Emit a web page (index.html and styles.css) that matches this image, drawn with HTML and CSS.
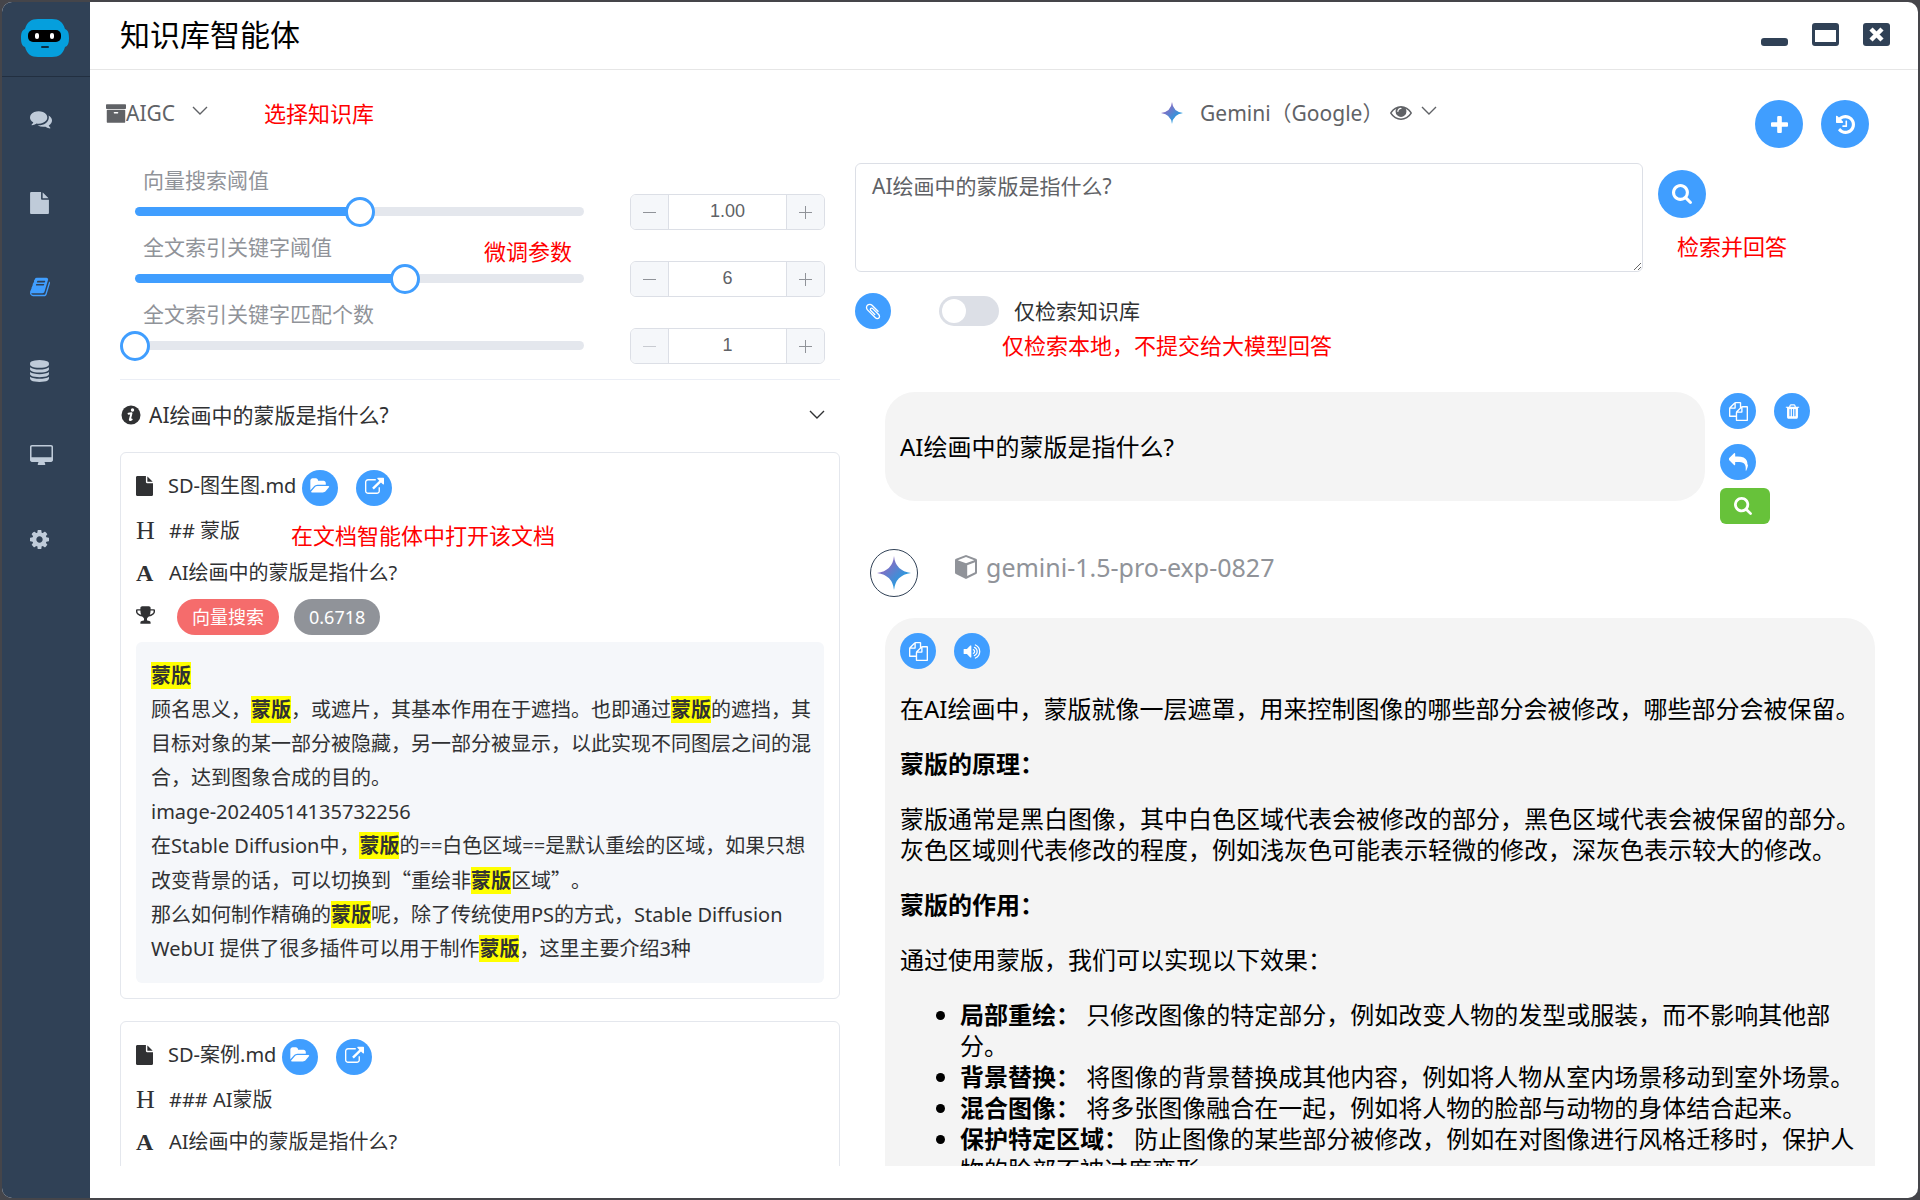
FILE: index.html
```html
<!DOCTYPE html>
<html lang="zh-CN">
<head>
<meta charset="utf-8">
<title>知识库智能体</title>
<link rel="stylesheet" href="styles.css">
</head>
<body>
<svg class="sprite" aria-hidden="true">
  <defs>
    <linearGradient id="spark-fill" x1="0" y1="0" x2="1" y2="1">
      <stop offset="0.2" stop-color="#9168c0"/>
      <stop offset="0.5" stop-color="#5684d1"/>
      <stop offset="0.8" stop-color="#1ba1e3"/>
    </linearGradient>
  </defs>
  <symbol id="comments" viewBox="0 0 1792 1792"><path d="M1408 768q0 139-94 257t-256.5 186.500-353.5 68.500q-86 0-176-16-124 88-278 128-36 9-86 16h-3q-11 0-20.500-8t-11.500-21q-1-3-1-6.500t.5-6.500 2-6l2.500-5 3.500-5.500 4-5 4.500-5 4-4.500q5-6 23-25t26-29.500 22.500-29 25-38.500 20.500-44q-124-72-195-177t-71-224q0-139 94-257t256.500-186.500 353.500-68.500 353.500 68.500 256.500 186.500 94 257zm384 256q0 120-71 224.500t-195 176.500q10 24 20.500 44t25 38.500 22.500 29 26 29.500 23 25q1 1 4 4.500t4.500 5 4 5 3.500 5.500l2.500 5 2 6 .5 6.500-1 6.500q-3 14-13 22t-22 7q-50-7-86-16-154-40-278-128-90 16-176 16-271 0-472-132 58 4 88 4 161 0 309-45t264-129q125-92 192-212t67-254q0-77-23-152 129 71 204 178t75 230z"/></symbol>
  <symbol id="file" viewBox="128 0 1536 1792"><path d="M1152 512v-472q22 14 36 28l408 408q14 14 28 36h-472zm-128 32q0 40 28 68t68 28h544v1056q0 40-28 68t-68 28h-1344q-40 0-68-28t-28-68v-1600q0-40 28-68t68-28h800v544z"/></symbol>
  <symbol id="book" viewBox="64 64 1664 1664"><path d="M1703 478q40 57 18 129l-275 906q-19 64-76.500 107.500t-122.500 43.500h-923q-77 0-148.500-53.500t-99.500-131.500q-24-67-2-127 0-4 3-27t4-37q1-8-3-21.500t-3-19.500q2-11 8-21t16.500-23.500 16.500-23.500q23-38 45-91.500t30-91.500q3-10 .5-30t-.5-28q3-11 17-28t17-23q21-36 42-92t25-90q1-9-2.500-32t.5-28q4-13 22-30.500t22-22.500q19-26 42.500-84.500t27.500-96.500q1-8-3-25.500t-2-26.500q2-8 9-18t18-23 17-21q8-12 16.500-30.500t15-35 16-36 19.500-32 26.500-23.500 36-11.500 47.500 5.500l-1 3q38-9 51-9h761q74 0 114 56t18 130l-274 906q-36 119-71.500 153.500t-128.500 34.500h-869q-27 0-38 15-11 16-1 43 24 70 144 70h923q29 0 56-15.500t35-41.500l300-987q7-22 5-57 38 15 59 43zm-1064 2q-4 13 2 22.500t20 9.500h608q13 0 25.500-9.500t16.500-22.500l21-64q4-13-2-22.500t-20-9.500h-608q-13 0-25.500 9.500t-16.500 22.500zm-83 256q-4 13 2 22.500t20 9.500h608q13 0 25.500-9.500t16.500-22.500l21-64q4-13-2-22.500t-20-9.500h-608q-13 0-25.500 9.500t-16.500 22.500z"/></symbol>
  <symbol id="database" viewBox="128 0 1536 1792"><path d="M896 768q237 0 443-43t325-127v170q0 69-103 128t-280 93.500-385 34.500-385-34.500-280-93.500-103-128v-170q119 84 325 127t443 43zm0 768q237 0 443-43t325-127v170q0 69-103 128t-280 93.500-385 34.500-385-34.500-280-93.500-103-128v-170q119 84 325 127t443 43zm0-384q237 0 443-43t325-127v170q0 69-103 128t-280 93.500-385 34.500-385-34.500-280-93.500-103-128v-170q119 84 325 127t443 43zm0-1152q208 0 385 34.500t280 93.500 103 128v128q0 69-103 128t-280 93.500-385 34.500-385-34.500-280-93.500-103-128v-128q0-69 103-128t280-93.500 385-34.500z"/></symbol>
  <symbol id="desktop" viewBox="-64 0 1920 1664"><path d="M1728 992v-832q0-13-9.500-22.500t-22.500-9.500h-1600q-13 0-22.500 9.500t-9.500 22.500v832q0 13 9.500 22.500t22.500 9.500h1600q13 0 22.500-9.500t9.500-22.500zm128-832v1088q0 66-47 113t-113 47h-544q0 37 16 77.500t32 71 16 43.500q0 26-19 45t-45 19h-512q-26 0-45-19t-19-45q0-14 16-44t32-70 16-78h-544q-66 0-113-47t-47-113v-1088q0-66 47-113t113-47h1600q66 0 113 47t47 113z"/></symbol>
  <symbol id="cog" viewBox="128 128 1536 1536"><path d="M1152 896q0-106-75-181t-181-75-181 75-75 181 75 181 181 75 181-75 75-181zm512-109v222q0 12-8 23t-20 13l-185 28q-19 54-39 91 35 50 107 138 10 12 10 25t-9 23q-27 37-99 108t-94 71q-12 0-26-9l-138-108q-44 23-91 38-16 136-29 186-7 28-36 28h-222q-14 0-24.500-8.500t-11.500-21.500l-28-184q-49-16-90-37l-141 107q-10 9-25 9-14 0-25-11-126-114-165-168-7-10-7-23 0-12 8-23 15-21 51-66.500t54-70.500q-27-50-41-99l-183-27q-13-2-21-12.500t-8-23.500v-222q0-12 8-23t19-13l186-28q14-46 39-92-40-57-107-138-10-12-10-24 0-10 9-23 26-36 98.500-107.500t94.500-71.500q13 0 26 10l138 107q44-23 91-38 16-136 29-186 7-28 36-28h222q14 0 24.500 8.500t11.500 21.500l28 184q49 16 90 37l142-107q9-9 24-9 13 0 25 10 129 119 165 170 7 8 7 22 0 12-8 23-15 21-51 66.500t-54 70.500q26 50 41 98l183 28q13 2 21 12.500t8 23.500z"/></symbol>
  <symbol id="archive" viewBox="64 128 1664 1536"><path d="M1088 832q0-26-19-45t-45-19h-256q-26 0-45 19t-19 45 19 45 45 19h256q26 0 45-19t19-45zm576-192v960q0 26-19 45t-45 19h-1408q-26 0-45-19t-19-45v-960q0-26 19-45t45-19h1408q26 0 45 19t19 45zm64-448v256q0 26-19 45t-45 19h-1536q-26 0-45-19t-19-45v-256q0-26 19-45t45-19h1536q26 0 45 19t19 45z"/></symbol>
  <symbol id="eye" viewBox="0 384 1792 1152"><path d="M1664 960q-152-236-381-353 61 104 61 225 0 185-131.500 316.500t-316.500 131.500-316.500-131.500-131.500-316.500q0-121 61-225-229 117-381 353 133 205 333.500 326.500t434.500 121.500 434.500-121.500 333.500-326.500zm-720-384q0-20-14-34t-34-14q-125 0-214.500 89.500t-89.500 214.500q0 20 14 34t34 14 34-14 14-34q0-86 61-147t147-61q20 0 34-14t14-34zm848 384q0 34-20 69-140 230-376.500 368.500t-499.500 138.500-499.500-139-376.500-368q-20-35-20-69t20-69q140-229 376.500-368t499.500-139 499.500 139 376.500 368q20 35 20 69z"/></symbol>
  <symbol id="plus" viewBox="192 128 1408 1408"><path d="M1600 736v192q0 40-28 68t-68 28h-416v416q0 40-28 68t-68 28h-192q-40 0-68-28t-28-68v-416h-416q-40 0-68-28t-28-68v-192q0-40 28-68t68-28h416v-416q0-40 28-68t68-28h192q40 0 68 28t28 68v416h416q40 0 68 28t28 68z"/></symbol>
  <symbol id="history" viewBox="128 128 1536 1536"><path d="M1664 896q0 156-61 298t-164 245-245 164-298 61q-172 0-327-72.500t-264-204.500q-7-10-6.500-22.500t8.500-20.500l137-138q10-9 25-9 16 2 23 12 73 95 179 147t225 52q104 0 198.500-40.500t163.500-109.500 109.500-163.500 40.500-198.500-40.500-198.500-109.500-163.500-163.500-109.500-198.500-40.500q-98 0-188 35.500t-160 101.500l137 138q31 30 14 69-17 40-59 40h-448q-26 0-45-19t-19-45v-448q0-42 40-59 39-17 69 14l130 129q107-101 244.500-156.500t284.500-55.500q156 0 298 61t245 164 164 245 61 298zm-640-288v448q0 14-9 23t-23 9h-320q-14 0-23-9t-9-23v-64q0-14 9-23t23-9h224v-352q0-14 9-23t23-9h64q14 0 23 9t9 23z"/></symbol>
  <symbol id="search" viewBox="64 128 1664 1664"><path d="M1216 832q0-185-131.500-316.500t-316.500-131.500-316.500 131.500-131.500 316.500 131.500 316.500 316.500 131.500 316.500-131.500 131.500-316.500zm512 832q0 52-38 90t-90 38q-54 0-90-38l-343-342q-179 124-399 124-143 0-273.500-55.500t-225-150-150-225-55.500-273.500 55.500-273.500 150-225 225-150 273.500-55.500 273.500 55.500 225 150 150 225 55.500 273.500q0 220-124 399l343 343q37 37 37 90z"/></symbol>
  <symbol id="clip" viewBox="128 64 1536 1664"><path d="M1596 1385q0 117-79 196t-196 79q-135 0-235-100l-777-776q-113-115-113-271 0-159 110-270t269-111q158 0 273 113l605 606q10 10 10 22 0 16-30.500 46.500t-46.500 30.500q-13 0-23-10l-606-607q-79-77-181-77-106 0-179 75t-73 181q0 105 76 181l776 777q63 63 145 63 64 0 106-42t42-106q0-82-63-145l-581-581q-26-24-60-24-29 0-48 19t-19 48q0 32 25 59l410 410q10 10 10 22 0 16-31 47t-47 31q-12 0-22-10l-410-410q-63-61-63-149 0-82 57-139t139-57q88 0 149 63l581 581q100 98 100 235z"/></symbol>
  <symbol id="copy" viewBox="0 0 1792 1792"><path d="M1696 384q40 0 68 28t28 68v1216q0 40-28 68t-68 28h-960q-40 0-68-28t-28-68v-288h-544q-40 0-68-28t-28-68v-672q0-40 20-88t48-76l408-408q28-28 76-48t88-20h416q40 0 68 28t28 68v328q68-40 128-40h416zm-544 213l-299 299h299v-299zm-640-384l-299 299h299v-299zm196 647l316-316v-416h-384v416q0 40-28 68t-68 28h-416v640h512v-256q0-40 20-88t48-76zm956 804v-1152h-384v416q0 40-28 68t-68 28h-416v640h896z"/></symbol>
  <symbol id="trash" viewBox="128 0 1536 1792"><path d="M704 1376v-704q0-14-9-23t-23-9h-64q-14 0-23 9t-9 23v704q0 14 9 23t23 9h64q14 0 23-9t9-23zm256 0v-704q0-14-9-23t-23-9h-64q-14 0-23 9t-9 23v704q0 14 9 23t23 9h64q14 0 23-9t9-23zm256 0v-704q0-14-9-23t-23-9h-64q-14 0-23 9t-9 23v704q0 14 9 23t23 9h64q14 0 23-9t9-23zm-544-992h448l-48-117q-7-9-17-11h-317q-10 2-17 11zm928 32v64q0 14-9 23t-23 9h-96v948q0 83-47 143.500t-113 60.500h-832q-66 0-113-58.500t-47-141.500v-952h-96q-14 0-23-9t-9-23v-64q0-14 9-23t23-9h309l70-167q15-37 54-63t79-26h320q40 0 79 26t54 63l70 167h309q14 0 23 9t9 23z"/></symbol>
  <symbol id="reply" viewBox="0 0 1792 1792"><path d="M1792 1120q0 166-127 451-3 7-10.500 24t-13.500 30-13 22q-12 17-28 17-15 0-23.500-10t-8.500-25q0-9 2.500-26.500t2.500-23.500q5-68 5-123 0-112-19.500-200.500t-54-153.500-89-112-118-76.500-144-46-164-22.500-182.500-6h-224v256q0 26-19 45t-45 19-45-19l-512-512q-19-19-19-45t19-45l512-512q19-19 45-19t45 19 19 45v256h224q713 0 875 403 53 134 53 333z"/></symbol>
  <symbol id="volume" viewBox="0 64 1792 1664"><path d="M832 352v1088q0 26-19 45t-45 19-45-19l-333-333h-262q-26 0-45-19t-19-45v-384q0-26 19-45t45-19h262l333-333q19-19 45-19t45 19 19 45zm384 544q0 76-42.500 141.500t-112.500 93.500q-10 5-25 5-26 0-45-18.500t-19-45.500q0-21 12-35.500t29-25 34-23 29-36 12-56.500-12-56.500-29-36-34-23-29-25-12-35.500q0-27 19-45.500t45-18.500q15 0 25 5 70 27 112.500 93t42.500 142zm256 0q0 153-85 282.500t-225 188.500q-13 5-25 5-27 0-46-19t-19-45q0-39 39-59 56-29 76-44 74-54 115.500-135.500t41.500-173.500-41.500-173.500-115.500-135.500q-20-15-76-44-39-20-39-59 0-26 19-45t45-19q13 0 26 5 140 59 225 188.500t85 282.500zm256 0q0 230-127 422.500t-338 283.500q-13 5-26 5-26 0-45-19t-19-45q0-36 39-59 7-4 22.500-10.500t22.500-10.500q46-25 82-51 123-91 192-227t69-289-69-289-192-227q-36-26-82-51-7-4-22.500-10.500t-22.500-10.500q-39-23-39-59 0-26 19-45t45-19q13 0 26 5 211 91 338 283.500t127 422.500z"/></symbol>
  <symbol id="folder" viewBox="0 0 1920 1792"><path d="M1879 952q0 31-31 66l-336 396q-43 51-120.500 86.500t-143.500 35.500h-1088q-34 0-60.500-13t-26.500-43q0-31 31-66l336-396q43-51 120.500-86.500t143.500-35.500h1088q34 0 60.500 13t26.500 43zm-343-344v160h-832q-94 0-197 47.500t-164 119.500l-337 396-5 6q0-4-.5-12.500t-.5-12.500v-960q0-92 66-158t158-66h320q92 0 158 66t66 158v32h544q92 0 158 66t66 158z"/></symbol>
  <symbol id="open" viewBox="0 -64 1792 1792"><path d="M1408 928v320q0 119-84.500 203.500t-203.500 84.500h-832q-119 0-203.500-84.500t-84.500-203.500v-832q0-119 84.500-203.500t203.500-84.500h704q14 0 23 9t9 23v64q0 14-9 23t-23 9h-704q-66 0-113 47t-47 113v832q0 66 47 113t113 47h832q66 0 113-47t47-113v-320q0-14 9-23t23-9h64q14 0 23 9t9 23zm384-864v512q0 26-19 45t-45 19-45-19l-176-176-652 652q-10 10-23 10t-23-10l-114-114q-10-10-10-23t10-23l652-652-176-176q-19-19-19-45t19-45 45-19h512q26 0 45 19t19 45z"/></symbol>
  <symbol id="trophy" viewBox="64 128 1664 1536"><path d="M522 883q-74-162-74-371h-256v96q0 78 94.500 162t235.500 113zm1078-275v-96h-256q0 209-74 371 141-29 235.500-113t94.500-162zm128-128v128q0 71-41.500 143t-112 130-173 97.500-215.500 44.500q-42 54-95 95-38 34-52.500 72.500t-14.500 89.500q0 54 30.500 91t97.500 37q75 0 133.500 45.500t58.500 114.500v64q0 14-9 23t-23 9h-832q-14 0-23-9t-9-23v-64q0-69 58.500-114.500t133.500-45.500q67 0 97.500-37t30.500-91q0-51-14.500-89.500t-52.500-72.500q-53-41-95-95-113-5-215.500-44.500t-173-97.500-112-130-41.500-143v-128q0-40 28-68t68-28h288v-96q0-66 47-113t113-47h576q66 0 113 47t47 113v96h288q40 0 68 28t28 68z"/></symbol>
  <symbol id="info" viewBox="0 0 20 20"><circle cx="10" cy="10" r="9.500"/><circle cx="11.500" cy="5" r="1.700" fill="#fff"/><path d="M7.500 8.700l3-.4-1.700 6.400q0 .8 1.900-.3" fill="none" stroke="#fff" stroke-width="1.900" stroke-linejoin="round" stroke-linecap="round"/></symbol>
  <symbol id="chevron" viewBox="0 0 16 10"><path d="M1 1l7 7 7-7" fill="none" stroke="currentColor" stroke-width="1.400"/></symbol>
  <symbol id="spark" viewBox="0 0 24 24"><path d="M12 0q1 10.500 12 12-11 1.500-12 12-1-10.500-12-12 11-1.500 12-12z" fill="url(#spark-fill)"/></symbol>
  <symbol id="cube" viewBox="0 0 22 24"><path fill-rule="evenodd" d="M11 0l10 3.800q1 .4 1 1.600v12.200q0 1-.9 1.500L11 24 .9 19.100Q0 18.600 0 17.600V5.400q0-1.200 1-1.600zm0 2.100L2.700 5.200 11 8.300l8.300-3.100zm1.200 19l7.800-3.900V7.300l-7.800 3z"/></symbol>
</svg>

<div class="app">
  <nav class="sidebar" aria-label="主导航">
    <div class="logo">
      <svg width="48" height="38" viewBox="0 0 48 38"><path d="M17 0h14c7 0 11 3 13 10 3 1 4 4 4 9s-1 8-4 9c-2 7-6 10-13 10H17C10 38 6 35 4 28c-3-1-4-4-4-9s1-8 4-9C6 3 10 0 17 0z" fill="#059fdd"/><rect x="7" y="11" width="33" height="12" rx="5" fill="#000"/><rect x="14" y="14" width="4" height="6" rx="2" fill="#fff"/><rect x="29" y="14" width="4" height="6" rx="2" fill="#fff"/><rect x="20" y="27" width="8" height="2" rx="1" fill="#0b2c40"/></svg>
    </div>
    <a class="nav-item" href="#chat" aria-label="对话"><svg width="22" height="22"><use href="#comments"/></svg></a>
    <a class="nav-item" href="#doc" aria-label="文档"><svg width="19" height="22"><use href="#file"/></svg></a>
    <a class="nav-item active" href="#kb" aria-label="知识库"><svg width="20" height="20"><use href="#book"/></svg></a>
    <a class="nav-item" href="#data" aria-label="数据"><svg width="19" height="22"><use href="#database"/></svg></a>
    <a class="nav-item" href="#desktop-view" aria-label="桌面"><svg width="23" height="20"><use href="#desktop"/></svg></a>
    <a class="nav-item" href="#settings" aria-label="设置"><svg width="19" height="19"><use href="#cog"/></svg></a>
  </nav>

  <div class="main">
    <header class="titlebar">
      <h1>知识库智能体</h1>
      <div class="window-controls">
        <button aria-label="最小化"><svg width="27" height="23"><rect y="15" width="27" height="8" rx="3"/></svg></button>
        <button aria-label="最大化"><svg width="27" height="23"><path fill-rule="evenodd" d="M3 0h21a3 3 0 013 3v17a3 3 0 01-3 3H3a3 3 0 01-3-3V3a3 3 0 013-3zm0 7v12h21V7z"/></svg></button>
        <button aria-label="关闭"><svg width="27" height="23"><rect width="27" height="23" rx="3"/><path d="M8 6l11 11M19 6l-11 11" stroke="#fff" stroke-width="4.500"/></svg></button>
      </div>
    </header>

    <div class="content">
      <section class="left">
        <div class="toolbar">
          <label class="picker">
            <svg width="20" height="19"><use href="#archive"/></svg>
            <select aria-label="知识库"><option>AIGC</option></select>
            <svg class="arrow" width="16" height="10"><use href="#chevron"/></svg>
          </label>
          <span class="note">选择知识库</span>
        </div>

        <div class="panel">
          <div class="params">
            <div class="param">
              <div class="param-main">
                <label for="p1">向量搜索阈值</label>
                <div class="slider" style="--v:50%"><span class="bar"></span><input id="p1" type="range" min="0" max="2" step="0.01" value="1"></div>
              </div>
              <div class="number"><button aria-label="减少"><span class="minus"></span></button><input aria-label="向量搜索阈值数值" value="1.00"><button aria-label="增加"><span class="minus cross"></span></button></div>
            </div>
            <div class="param">
              <div class="param-main">
                <label for="p2">全文索引关键字阈值</label>
                <div class="slider" style="--v:60%"><span class="bar"></span><input id="p2" type="range" min="0" max="10" value="6"></div>
              </div>
              <div class="number"><button aria-label="减少"><span class="minus"></span></button><input aria-label="全文索引关键字阈值数值" value="6"><button aria-label="增加"><span class="minus cross"></span></button></div>
            </div>
            <div class="param">
              <div class="param-main">
                <label for="p3">全文索引关键字匹配个数</label>
                <div class="slider" style="--v:0%"><span class="bar"></span><input id="p3" type="range" min="1" max="10" value="1"></div>
              </div>
              <div class="number"><button aria-label="减少" disabled><span class="minus"></span></button><input aria-label="全文索引关键字匹配个数数值" value="1"><button aria-label="增加"><span class="minus cross"></span></button></div>
            </div>
            <span class="note note-params">微调参数</span>
          </div>

          <button class="collapse">
            <svg width="20" height="20"><use href="#info"/></svg>
            <span>AI绘画中的蒙版是指什么?</span>
            <svg class="arrow" width="16" height="10"><use href="#chevron"/></svg>
          </button>

          <article class="card">
            <div class="file-row">
              <svg width="17" height="20"><use href="#file"/></svg>
              <span>SD-图生图.md</span>
              <button class="round" aria-label="打开文件夹"><svg width="20" height="18"><use href="#folder"/></svg></button>
              <button class="round" aria-label="在文档智能体中打开"><svg width="19" height="19"><use href="#open"/></svg></button>
            </div>
            <div class="meta"><span class="letter heading">H</span><span>## 蒙版</span></div>
            <div class="meta"><b class="letter">A</b><span>AI绘画中的蒙版是指什么?</span></div>
            <div class="tags">
              <svg width="19" height="18"><use href="#trophy"/></svg>
              <span class="tag danger">向量搜索</span><span class="tag">0.6718</span>
            </div>
            <div class="excerpt">
              <mark>蒙版</mark><br>
              顾名思义，<mark>蒙版</mark>，或遮片，其基本作用在于遮挡。也即通过<mark>蒙版</mark>的遮挡，其<br>
              目标对象的某一部分被隐藏，另一部分被显示，以此实现不同图层之间的混<br>
              合，达到图象合成的目的。<br>
              image-20240514135732256<br>
              在Stable Diffusion中，<mark>蒙版</mark>的==白色区域==是默认重绘的区域，如果只想<br>
              改变背景的话，可以切换到<span class="cjk">“</span>重绘非<mark>蒙版</mark>区域<span class="cjk">”</span>。<br>
              那么如何制作精确的<mark>蒙版</mark>呢，除了传统使用PS的方式，Stable Diffusion<br>
              WebUI 提供了很多插件可以用于制作<mark>蒙版</mark>，这里主要介绍3种
            </div>
            <span class="note note-open">在文档智能体中打开该文档</span>
          </article>

          <article class="card">
            <div class="file-row">
              <svg width="17" height="20"><use href="#file"/></svg>
              <span>SD-案例.md</span>
              <button class="round" aria-label="打开文件夹"><svg width="20" height="18"><use href="#folder"/></svg></button>
              <button class="round" aria-label="在文档智能体中打开"><svg width="19" height="19"><use href="#open"/></svg></button>
            </div>
            <div class="meta"><span class="letter heading">H</span><span>### AI蒙版</span></div>
            <div class="meta"><b class="letter">A</b><span>AI绘画中的蒙版是指什么?</span></div>
            <div class="tags"></div>
          </article>
        </div>
      </section>

      <section class="right">
        <div class="toolbar">
          <label class="picker model">
            <svg width="22" height="22"><use href="#spark"/></svg>
            <select aria-label="模型"><option>Gemini（Google）</option></select>
            <svg class="eye" width="22" height="14"><use href="#eye"/></svg>
            <svg class="arrow" width="16" height="10"><use href="#chevron"/></svg>
          </label>
          <div class="session">
            <button class="round large" aria-label="新建"><svg width="17" height="17"><use href="#plus"/></svg></button>
            <button class="round large" aria-label="历史"><svg width="19" height="19"><use href="#history"/></svg></button>
          </div>
        </div>

        <div class="query">
          <textarea aria-label="问题">AI绘画中的蒙版是指什么?</textarea>
          <div class="query-side">
            <button class="round large" aria-label="检索"><svg width="20" height="20"><use href="#search"/></svg></button>
            <span class="note">检索并回答</span>
          </div>
        </div>
        <div class="options">
          <button class="round" aria-label="附件"><svg width="16" height="17"><use href="#clip"/></svg></button>
          <label class="switch"><input type="checkbox">仅检索知识库</label>
        </div>
        <span class="note note-local">仅检索本地，不提交给大模型回答</span>

        <div class="chat">
          <div class="ask">
            <div class="bubble">AI绘画中的蒙版是指什么?</div>
            <div class="ask-actions">
              <div class="pair">
                <button class="round" aria-label="复制"><svg width="19" height="19"><use href="#copy"/></svg></button>
                <button class="round" aria-label="删除"><svg width="15" height="17"><use href="#trash"/></svg></button>
              </div>
              <button class="round" aria-label="回复"><svg width="19" height="19"><use href="#reply"/></svg></button>
              <button class="find" aria-label="重新检索"><svg width="18" height="18"><use href="#search"/></svg></button>
            </div>
          </div>

          <div class="model-line">
            <span class="avatar"><svg width="34" height="34"><use href="#spark"/></svg></span>
            <div class="model-name">
              <svg width="22" height="24"><use href="#cube"/></svg>
              <span>gemini-1.5-pro-exp-0827</span>
            </div>
          </div>

          <div class="answer">
            <div class="pair">
              <button class="round" aria-label="复制"><svg width="19" height="19"><use href="#copy"/></svg></button>
              <button class="round" aria-label="朗读"><svg width="18" height="17"><use href="#volume"/></svg></button>
            </div>
            <p>在AI绘画中，蒙版就像一层遮罩，用来控制图像的哪些部分会被修改，哪些部分会被保留。</p>
            <p><strong>蒙版的原理：</strong></p>
            <p>蒙版通常是黑白图像，其中白色区域代表会被修改的部分，黑色区域代表会被保留的部分。灰色区域则代表修改的程度，例如浅灰色可能表示轻微的修改，深灰色表示较大的修改。</p>
            <p><strong>蒙版的作用：</strong></p>
            <p>通过使用蒙版，我们可以实现以下效果：</p>
            <ul>
              <li><strong>局部重绘：</strong> 只修改图像的特定部分，例如改变人物的发型或服装，而不影响其他部分。</li>
              <li><strong>背景替换：</strong> 将图像的背景替换成其他内容，例如将人物从室内场景移动到室外场景。</li>
              <li><strong>混合图像：</strong> 将多张图像融合在一起，例如将人物的脸部与动物的身体结合起来。</li>
              <li><strong>保护特定区域：</strong> 防止图像的某些部分被修改，例如在对图像进行风格迁移时，保护人物的脸部不被过度变形。</li>
            </ul>
          </div>
        </div>
      </section>
    </div>
  </div>
</div>
</body>
</html>
```
FILE: styles.css
```css
* { box-sizing: border-box; }

body {
  margin: 0;
  background: #45454a;
  color: #303133;
  font-family: "Noto Sans", "Noto Sans CJK SC", sans-serif;
  font-size: 20px;
  line-height: 32px;
  text-spacing-trim: space-all;
}

button, input, select, textarea { font: inherit; color: inherit; }
button { border: 0; padding: 0; background: none; cursor: pointer; }
svg { display: block; flex: none; fill: currentColor; }
.sprite { position: absolute; width: 0; height: 0; }

.app {
  display: flex;
  height: calc(100vh - 4px);
  margin: 2px;
  border-radius: 10px;
  overflow: hidden;
  background: #fff;
}

/* Sidebar */
.sidebar { flex: none; width: 88px; background: #304156; }
.logo {
  display: flex;
  align-items: center;
  justify-content: center;
  height: 75px;
  padding: 0 3px 2px 0;
  border-bottom: 1px solid #222f40;
}
.nav-item {
  display: flex;
  align-items: center;
  height: 84px;
  padding-left: 28px;
  color: #bfcbd9;
}
.nav-item.active { color: #409eff; }

/* Title bar */
.main { flex: 1; min-width: 0; display: flex; flex-direction: column; }
.titlebar {
  flex: none;
  display: flex;
  align-items: center;
  justify-content: space-between;
  height: 68px;
  padding: 0 28px 2px 30px;
  border-bottom: 1px solid #e6e6e6;
  color: #000;
}
.titlebar h1 { margin: 0; font-size: 30px; font-weight: 400; }
.window-controls { display: flex; gap: 24px; color: #304156; }

.content {
  flex: 1;
  min-height: 0;
  display: grid;
  grid-template-columns: 734fr 1020fr;
  gap: 15px;
  padding: 0 43px 32px 16px;
}
.left, .right { min-width: 0; min-height: 0; display: flex; flex-direction: column; overflow: hidden; }

.note { color: #f00; font-size: 22px; white-space: nowrap; }

.toolbar { flex: none; display: flex; align-items: center; height: 88px; padding-bottom: 2px; }
.picker { display: flex; align-items: center; color: #606266; font-size: 21px; }
.picker select { appearance: none; border: 0; padding: 0; background: none; }
.picker .arrow { margin: 0 0 4px 16px; }
.toolbar .picker + .note { margin-left: 56px; }
.model { margin-left: 30%; }
.model select { margin-left: 17px; }
.model .eye { margin-left: 6px; }
.picker.model .arrow { margin-left: 9px; }
.session { display: flex; gap: 18px; margin: 22px 6px 0 auto; }

.round {
  flex: none;
  display: flex;
  align-items: center;
  justify-content: center;
  width: 36px;
  height: 36px;
  border-radius: 50%;
  background: #409eff;
  color: #fff;
}
.round.large { width: 48px; height: 48px; }

/* Search parameters */
.panel { padding: 9px 0 0 14px; }
.params { position: relative; padding-bottom: 11px; border-bottom: 1px solid #ebeef5; }
.param { display: flex; justify-content: space-between; align-items: flex-end; height: 67px; padding: 0 15px 4px 0; }
.param-main { width: 68%; margin-bottom: 1px; }
.param-main label { display: block; margin-left: 23px; color: #909399; font-size: 21px; line-height: 28px; }
.slider { display: grid; align-items: center; height: 35px; }
.slider > * { grid-area: 1 / 1; }
.bar {
  height: 9px;
  margin: 0 15px;
  border-radius: 5px;
  background: linear-gradient(to right, #409eff var(--v), #e4e7ed var(--v));
}
.slider input { appearance: none; width: 100%; height: 30px; margin: 0; background: none; }
.slider input::-webkit-slider-thumb {
  appearance: none;
  width: 30px;
  height: 30px;
  border: 3px solid #409eff;
  border-radius: 50%;
  background: #fff;
}
.note-params { position: absolute; left: 364px; top: 68px; }

.number {
  display: flex;
  width: 195px;
  height: 36px;
  border: 1px solid #dcdfe6;
  border-radius: 6px;
  overflow: hidden;
}
.number button { flex: none; width: 37px; display: grid; place-items: center; background: #f5f7fa; color: #909399; }
.number button:disabled { color: #c8cbd1; }
.number input {
  flex: 1;
  min-width: 0;
  padding: 0 0 2px;
  border: solid #dcdfe6;
  border-width: 0 1px;
  text-align: center;
  color: #606266;
  font-family: "Liberation Sans", sans-serif;
  font-size: 18px;
}
.minus { position: relative; width: 13px; height: 1px; background: currentColor; }
.cross::after { content: ""; position: absolute; left: 6px; top: -6px; width: 1px; height: 13px; background: currentColor; }

/* Results */
.collapse { display: flex; align-items: center; gap: 8px; width: 100%; height: 69px; padding: 0 15px 0 1px; font-size: 21px; }
.collapse .arrow { margin-left: auto; }

.card {
  position: relative;
  margin: 3px 0 22px;
  padding: 17px 15px 15px;
  border: 1px solid #e4e7ed;
  border-radius: 6px;
}
.card + .card { margin-top: 0; }
.file-row { display: flex; align-items: center; height: 36px; }
.file-row span { margin: 0 6px 4px 15px; }
.file-row svg:first-child { margin-bottom: 4px; }
.file-row .round + .round { margin-left: 18px; }
.meta { display: flex; align-items: center; height: 42px; gap: 15px; }
.file-row + .meta { margin-top: 4px; }
.letter { width: 18px; font-family: "Liberation Serif", serif; font-size: 24px; }
.letter.heading { font-size: 26px; }
.tags { display: flex; gap: 15px; height: 36px; margin-top: 5px; }
.tags svg { margin: 7px 7px 0 0; }
.tag { padding: 2px 15px; border-radius: 18px; background: #909399; color: #fff; font-size: 18px; }
.tag.danger { background: #f56c6c; }
.excerpt {
  margin-top: 7px;
  padding: 17px 11px 17px 15px;
  border-radius: 6px;
  background: #f5f7fa;
  line-height: 34px;
  white-space: nowrap;
}
.excerpt mark { background: #ff0; color: inherit; font-weight: 700; }
.cjk { font-family: "Noto Sans CJK SC", sans-serif; }
.note-open { position: absolute; left: 170px; top: 66px; }

/* Query form */
.query { flex: none; display: flex; gap: 15px; margin-top: 5px; }
.query textarea {
  flex: 1;
  min-width: 0;
  height: 109px;
  padding: 6px 16px;
  border: 1px solid #dcdfe6;
  border-radius: 6px;
  color: #606266;
  font-size: 21px;
}
.query-side { width: 217px; padding-top: 7px; }
.query-side .note { display: block; margin: 12px 0 0 19px; }
.options { flex: none; display: flex; align-items: center; gap: 48px; height: 36px; margin-top: 21px; }
.switch { display: flex; align-items: center; gap: 15px; font-size: 21px; }
.switch input { appearance: none; width: 60px; height: 30px; margin: 0; padding: 3px; border-radius: 15px; background: #dcdfe6; }
.switch input::before { content: ""; display: block; width: 24px; height: 24px; border-radius: 50%; background: #fff; }
.note-local { margin-left: 147px; }

/* Conversation */
.chat { flex: 1; min-height: 0; margin-top: 31px; overflow: hidden; color: #000; font-size: 24px; line-height: 31px; }
.ask { display: flex; align-items: flex-start; gap: 15px; margin-left: 30px; }
.bubble { flex: 1; padding: 39px 15px; border-radius: 30px; background: #f4f4f4; }
.ask-actions { width: 155px; padding-top: 1px; }
.ask-actions > .round { margin-top: 15px; }
.pair { display: flex; gap: 18px; }
.find {
  display: grid;
  place-items: center;
  width: 50px;
  height: 36px;
  margin-top: 8px;
  padding-right: 4px;
  border-radius: 6px;
  background: #67c23a;
  color: #fff;
}
.model-line { display: flex; gap: 37px; margin: 25px 0 21px 15px; }
.avatar { display: grid; place-items: center; width: 48px; height: 48px; border: 1px solid #304156; border-radius: 50%; }
.model-name { display: flex; align-items: center; gap: 9px; height: 36px; color: #909399; font-size: 25px; }
.answer { margin-left: 30px; padding: 15px; border-radius: 30px; background: #f4f4f4; }
.answer p, .answer ul { margin: 24px 0; }
.answer ul { padding-left: 60px; }
```
